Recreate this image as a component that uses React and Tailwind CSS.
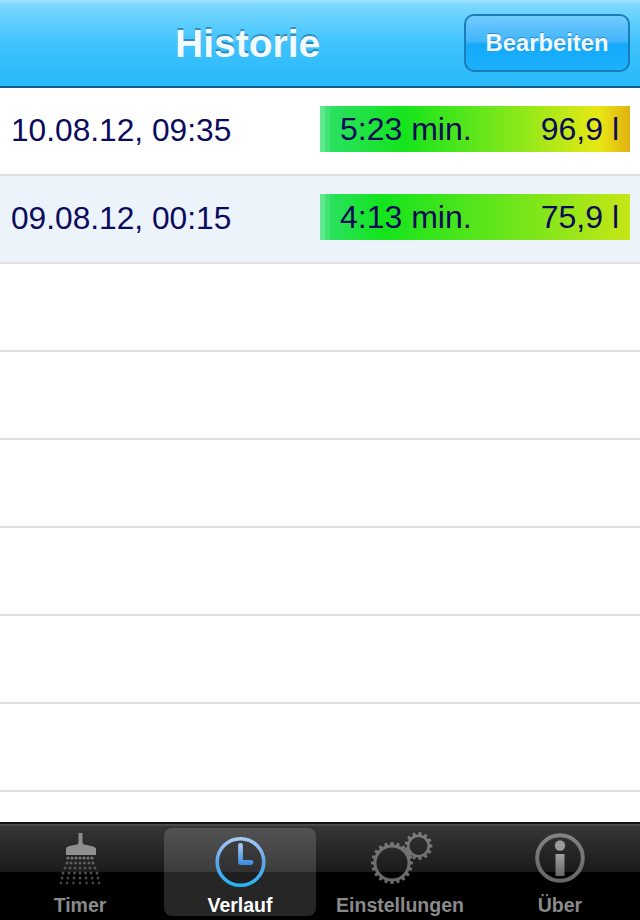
function ShowerIcon() {
  const rows = [
    { y: 858, xs: [68, 72, 76, 80, 84, 88, 92], r: 1.6, fill: '#747474' },
    { y: 863, xs: [67, 71, 75.5, 80, 84.5, 89, 93], r: 1.5, fill: '#5e5e5e' },
    { y: 868, xs: [65, 70, 75, 80, 85, 90, 95], r: 1.5, fill: '#555555' },
    { y: 873, xs: [63, 69, 74.5, 80, 85.5, 91, 97], r: 1.5, fill: '#4e4e4e' },
    { y: 878, xs: [62, 68, 74, 80, 86, 92, 98], r: 1.5, fill: '#484848' },
    { y: 883, xs: [61, 67, 73.5, 80, 86.5, 93, 99], r: 1.4, fill: '#424242' },
  ]
  return (
    <svg width="60" height="60" viewBox="50 829 60 60" className="block blur-[0.5px]">
      <path d="M78.500 833h4v9l1 3h-6l1-3z" fill="#8c8c8c" />
      <path d="M66 855v-6c0-2 3-3 6-3.500l5-1h7l5 1c3 .5 7 1.500 7 3.500v6z" fill="#8f8f8f" />
      {rows.map(row => row.xs.map(x => (
        <circle key={`${row.y}-${x}`} cx={x} cy={row.y} r={row.r} fill={row.fill} />
      )))}
    </svg>
  )
}

function ClockIcon() {
  return (
    <svg width="60" height="60" viewBox="210 829 60 60" className="block blur-[0.4px]">
      <defs>
        <linearGradient id="clockRing" gradientUnits="userSpaceOnUse" x1="0" y1="837" x2="0" y2="887">
          <stop offset="0" stopColor="#a9cdf2" />
          <stop offset="0.5" stopColor="#5fa4ea" />
          <stop offset="1" stopColor="#22b6f7" />
        </linearGradient>
        <linearGradient id="clockHand" gradientUnits="userSpaceOnUse" x1="0" y1="843" x2="0" y2="865">
          <stop offset="0" stopColor="#a9d0f5" />
          <stop offset="1" stopColor="#3a8ae2" />
        </linearGradient>
      </defs>
      <circle cx="240.500" cy="862" r="23.300" fill="rgba(0,0,0,0.18)" stroke="url(#clockRing)" strokeWidth="3.600" />
      <path d="M240.500 845.500V862.500H251" fill="none" stroke="url(#clockHand)" strokeWidth="4.800" strokeLinecap="round" strokeLinejoin="round" />
    </svg>
  )
}

function Gear({ cx, cy, outer, base, hole, teeth }) {
  const step = (Math.PI * 2) / teeth
  let d = ''
  for (let i = 0; i < teeth; i++) {
    const a = i * step
    const corners = [[a - step * 0.3, base], [a - step * 0.2, outer], [a + step * 0.2, outer], [a + step * 0.3, base]]
    corners.forEach(([t, r], j) => {
      d += `${i === 0 && j === 0 ? 'M' : 'L'}${(cx + Math.cos(t) * r).toFixed(2)} ${(cy + Math.sin(t) * r).toFixed(2)}`
    })
  }
  d += `Z M${cx - hole} ${cy}a${hole} ${hole} 0 1 0 ${hole * 2} 0a${hole} ${hole} 0 1 0 ${-hole * 2} 0Z`
  return <path d={d} fillRule="evenodd" fill="url(#gearFill)" />
}

function GearsIcon() {
  return (
    <svg width="70" height="62" viewBox="365 828 70 62" className="block blur-[0.6px]">
      <defs>
        <linearGradient id="gearFill" gradientUnits="userSpaceOnUse" x1="0" y1="833" x2="0" y2="885">
          <stop offset="0" stopColor="#7c7c7c" />
          <stop offset="1" stopColor="#666666" />
        </linearGradient>
      </defs>
      <Gear cx={392} cy={863} outer={21} base={18.5} hole={15.5} teeth={20} />
      <Gear cx={418.5} cy={846} outer={14} base={11.500} hole={9} teeth={13} />
    </svg>
  )
}

function InfoIcon() {
  return (
    <svg width="60" height="60" viewBox="530 829 60 60" className="block blur-[0.4px]">
      <defs>
        <linearGradient id="infoFill" gradientUnits="userSpaceOnUse" x1="0" y1="833" x2="0" y2="883">
          <stop offset="0" stopColor="#838383" />
          <stop offset="1" stopColor="#666666" />
        </linearGradient>
        <linearGradient id="infoStem" gradientUnits="userSpaceOnUse" x1="0" y1="854" x2="0" y2="876">
          <stop offset="0" stopColor="#a0a0a0" />
          <stop offset="1" stopColor="#666666" />
        </linearGradient>
      </defs>
      <circle cx="560" cy="858" r="22.800" fill="none" stroke="url(#infoFill)" strokeWidth="4" />
      <circle cx="560" cy="845.500" r="5.200" fill="#9a9a9a" />
      <path d="M555.500 854h9v22h-9z" fill="url(#infoStem)" />
    </svg>
  )
}

const rows = [
  { date: '10.08.12, 09:35', time: '5:23 min.', liters: '96,9 l', bg: 'bg-white', bar: 'bg-[linear-gradient(90deg,#2ee06c_0%,#14e41c_27%,#8ee81a_65%,#e8e814_90%,#e2b012_100%)]' },
  { date: '09.08.12, 00:15', time: '4:13 min.', liters: '75,9 l', bg: 'bg-[#edf3fa]', bar: 'bg-[linear-gradient(90deg,#2ee06c_0%,#14e41c_20%,#7fe61a_70%,#c6e616_100%)]' },
  { date: '', bg: 'bg-white' },
  { date: '', bg: 'bg-white' },
  { date: '', bg: 'bg-white' },
  { date: '', bg: 'bg-white' },
  { date: '', bg: 'bg-white' },
  { date: '', bg: 'bg-white' },
]

const tabs = [
  { label: 'Timer', icon: <ShowerIcon /> },
  { label: 'Verlauf', icon: <ClockIcon />, active: true },
  { label: 'Einstellungen', icon: <GearsIcon /> },
  { label: 'Über', icon: <InfoIcon /> },
]

export default function App() {
  return (
    <div className="h-[920px] w-[640px] flex flex-col overflow-hidden bg-white font-['Liberation_Sans',Arial,sans-serif]">
      <header className="h-[88px] shrink-0 flex items-center border-b-2 border-[#0f5f86] bg-[linear-gradient(180deg,#9fe0ff_0%,#7ad8ff_6%,#3fc3fd_50%,#28b8fb_100%)]">
        <h1 className="ml-[175px] text-[39px] leading-none font-bold text-[#f2fbff] [text-shadow:0_-2px_0_rgba(30,90,130,0.55)]">Historie</h1>
        <button className="ml-auto mr-[10px] w-[166px] h-[58px] rounded-[10px] border-2 border-[#1a7db5] text-[23.800px] font-bold text-[#eefaff] bg-[linear-gradient(180deg,#72cbff_0%,#3fb4fb_48%,#14a8fb_52%,#1cb0fc_100%)] [text-shadow:0_-1px_0_rgba(30,90,130,0.5)]">
          Bearbeiten
        </button>
      </header>

      <div className="flex-1 overflow-hidden">
        {rows.map((row, i) => (
          <div key={i} className={`h-[88px] border-b-2 border-[#dfdfdf] flex items-center pl-[11px] pr-[10px] pb-[4px] ${row.bg}`}>
            {row.date && (
              <>
                <span className="mt-[3px] text-[31.700px] leading-none text-[#0b0b5e]">{row.date}</span>
                <div className={`relative ml-auto w-[310px] h-[46px] flex items-center justify-between pl-[20px] pr-[11px] text-[32px] leading-none text-[#0a0a58] ${row.bar}`}>
                  <span className="absolute left-0 top-0 h-full w-[5px] bg-white/25" />
                  <span className="absolute left-[5px] top-0 h-full w-[5px] bg-white/10" />
                  <span className="relative">{row.time}</span>
                  <span className="relative">{row.liters}</span>
                </div>
              </>
            )}
          </div>
        ))}
      </div>

      <nav className="relative h-[98px] shrink-0 border-t-2 border-[#111] bg-black">
        <div className="absolute inset-x-0 top-0 h-[48px] border-t-2 border-[#4a4a4a] bg-[linear-gradient(180deg,#363636_0%,#1a1a1a_100%)]" />
        <div className="relative h-full grid grid-cols-4 gap-2 px-1 pt-1 pb-[4px]">
          {tabs.map(tab => (
            <div key={tab.label} className={`relative flex flex-col items-center rounded-lg ${tab.active ? 'bg-white/15' : ''}`}>
              <div className="h-[60px] flex items-center justify-center mt-[1px]">{tab.icon}</div>
              <span className={`absolute bottom-[-1px] text-[19.500px] leading-[24px] font-bold ${tab.active ? 'text-white' : 'text-[#8a8a8a]'}`}>{tab.label}</span>
            </div>
          ))}
        </div>
      </nav>
    </div>
  )
}
